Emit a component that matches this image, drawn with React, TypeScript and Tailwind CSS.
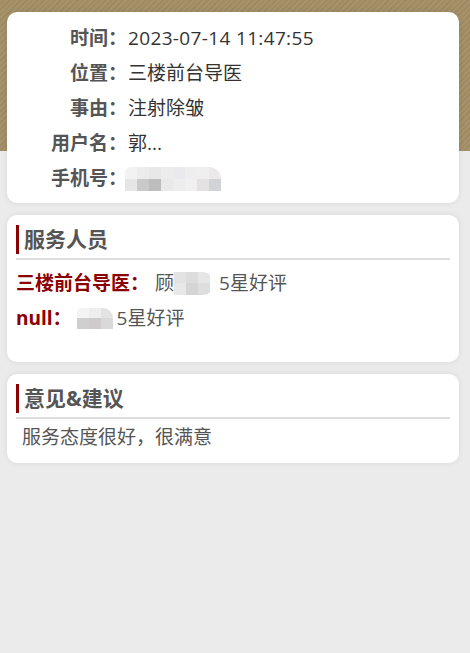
const infoRows = [
  { label: '时间：', value: '2023-07-14 11:47:55', wide: true },
  { label: '位置：', value: '三楼前台导医', wide: false },
  { label: '事由：', value: '注射除皱', wide: false },
  { label: '用户名：', value: '郭...', wide: false },
]

function Mosaic({ cells, className }: { cells: string[]; className: string }) {
  return (
    <span className={`inline-flex flex-wrap overflow-hidden align-middle ${className}`}>
      {cells.map((c, i) => (
        <span key={i} className="h-1/2 w-3" style={{ background: c }} />
      ))}
    </span>
  )
}

function SectionTitle({ title }: { title: string }) {
  return (
    <div className="border-b-2 border-[#dddddd] pb-[4px]">
      <h2 className="border-l-[3px] border-[#8b0000] pl-[5px] text-[21px] font-bold leading-[29px] text-[#555555]">
        {title}
      </h2>
    </div>
  )
}

export default function App() {
  return (
    <div className="min-h-[653px] bg-[#ebebeb] font-['Open_Sans','Noto_Sans_CJK_SC',sans-serif] text-[19px]">
      <div className="h-[151px] bg-[repeating-linear-gradient(135deg,#a6926b_0px,#a6926b_2px,#9f8b62_2px,#9f8b62_4px)]" />

      <div className="-mt-[139px] ml-[7px] mr-[11px] flex flex-col gap-3">
        {/* Info */}
        <div className="rounded-[10px] bg-white pb-[7px] pt-[9px] shadow-[0_0_6px_rgba(0,0,0,0.08)]">
          {infoRows.map((r) => (
            <div key={r.label} className="flex h-[35px] items-center">
              <span className="w-[120px] shrink-0 text-right font-bold text-[#555555]">{r.label}</span>
              <span className={`pl-[1px] text-[#333333] ${r.wide ? 'tracking-[0.35px]' : ''}`}>{r.value}</span>
            </div>
          ))}
          <div className="flex h-[35px] items-center">
            <span className="w-[120px] shrink-0 text-right font-bold text-[#555555]">手机号：</span>
            <Mosaic
              className="-ml-[2px] h-[24px] w-[96px] rounded-tl-[6px] rounded-tr-[12px] blur-[0.5px]"
              cells={[
                '#f2f2f2', '#ececec', '#e8e8e8', '#ececec', '#eaeaee', '#eeeeee', '#efefef', '#ebe9e9',
                '#e6e6e6', '#c9c9c9', '#bdbdbd', '#e9e9e9', '#ededee', '#f0f0f0', '#e3e1e1', '#d2d3d6',
              ]}
            />
          </div>
        </div>

        {/* Staff */}
        <div className="rounded-[10px] bg-white px-[9px] pb-[29px] pt-[10px] shadow-[0_0_6px_rgba(0,0,0,0.08)]">
          <SectionTitle title="服务人员" />
          <div className="mt-[8px] flex h-[30px] items-center">
            <span className="font-bold text-[#8b0000]">三楼前台导医：</span>
            <span className="ml-[6px] text-[#555555]">顾</span>
            <Mosaic
              className="h-[23px] w-[40px] rounded-r-[11px] blur-[0.5px]"
              cells={['#e3e3e3', '#dcdcdc', '#e6e6e6', '#e8e8e8', '#d5d5d5', '#dedede']}
            />
            <span className="ml-[5px] text-[#555555]">5星好评</span>
          </div>
          <div className="mt-[5px] flex h-[30px] items-center">
            <span className="font-bold text-[#8b0000]">null：</span>
            <Mosaic
              className="ml-[5px] h-[21px] w-[36px] rounded-tl-[4px] rounded-tr-[10px] blur-[0.5px]"
              cells={['#f4f4f4', '#eeeeee', '#e3e3e3', '#cfcfcf', '#cdcbcb', '#d9d9d9']}
            />
            <span className="ml-[4px] text-[#555555]">5星好评</span>
          </div>
        </div>

        {/* Advice */}
        <div className="rounded-[10px] bg-white px-[9px] pb-[12px] pt-[10px] shadow-[0_0_6px_rgba(0,0,0,0.08)]">
          <SectionTitle title="意见&建议" />
          <p className="mt-[4px] pl-[6px] leading-[28px] text-[#555555]">服务态度很好，很满意</p>
        </div>
      </div>
    </div>
  )
}
